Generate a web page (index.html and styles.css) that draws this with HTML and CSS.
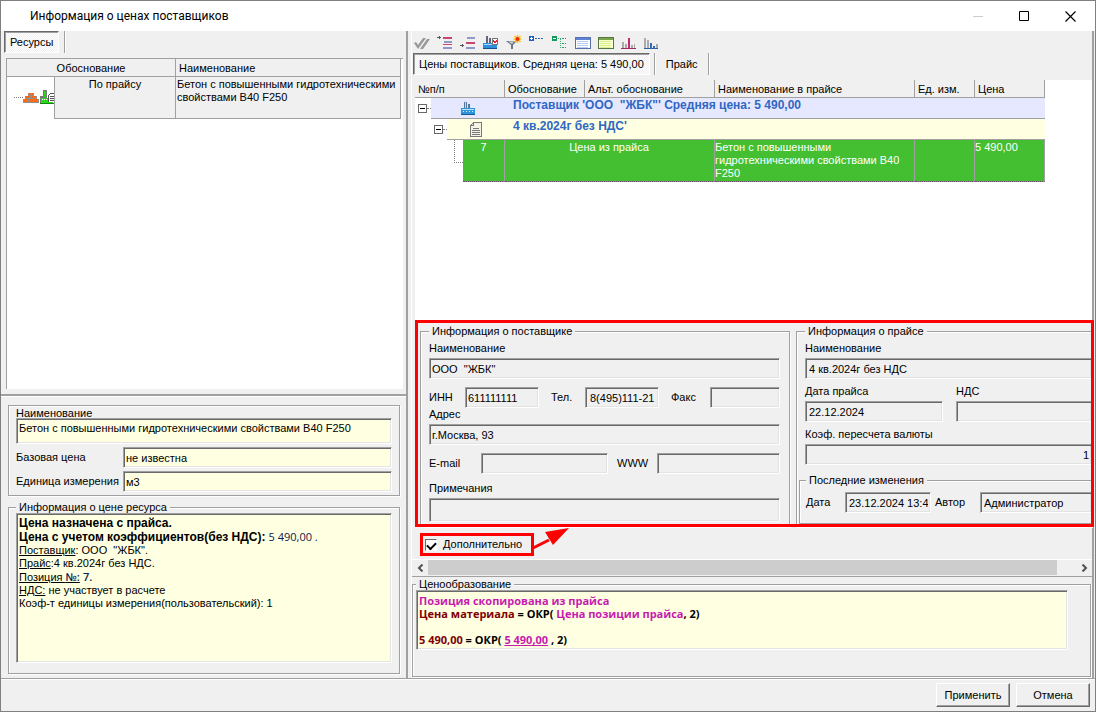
FILE: index.html
```html
<!DOCTYPE html>
<html lang="ru">
<head>
  <meta charset="UTF-8">
  <meta name="viewport" content="width=device-width, initial-scale=1.0">
  <title>Информация о ценах поставщиков</title>
  <link rel="stylesheet" href="styles.css">
</head>
<body>
  <div class="window">
    <header class="titlebar">
      <h1>Информация о ценах поставщиков</h1>
      <button class="win-btn" aria-label="Свернуть" disabled>
        <svg width="11" height="11"><path d="M0 5.5h10" stroke="#ccc"/></svg>
      </button>
      <button class="win-btn" aria-label="Развернуть">
        <svg width="11" height="11"><path d="M.5.5h9v9h-9z" fill="none" stroke="#000"/></svg>
      </button>
      <button class="win-btn" aria-label="Закрыть">
        <svg width="11" height="11"><path d="M.5.5l10 10M10.5.5l-10 10" stroke="#000" stroke-width="1.2"/></svg>
      </button>
    </header>

    <main class="panes">
      <section class="left">
        <nav class="tabs">
          <button class="tab active">Ресурсы</button>
          <span class="sep"></span>
        </nav>

        <div class="list resources">
          <table>
            <colgroup><col class="c-tree"><col class="c-basis"><col></colgroup>
            <thead>
              <tr><th colspan="2" class="center">Обоснование</th><th>Наименование</th></tr>
            </thead>
            <tbody>
              <tr>
                <td class="tree-cell">
                  <div class="tree-icons">
                    <span class="dots"></span>
                    <svg width="16" height="11" shape-rendering="crispEdges">
                      <path d="M5 1h6v3H5zM2 4h12v3H2zM0 7h16v4H0z" fill="#909090"/>
                      <path d="M6 1h4v2H6zM3 4h4v2H3zM9 4h4v2H9zM1 7h4v3H1zM6 7h4v3H6zM11 7h4v3h-4z" fill="#ff6a10"/>
                    </svg>
                    <svg width="15" height="15" shape-rendering="crispEdges">
                      <path d="M4 0h4v8h1v6H1V6h3z" fill="#777"/>
                      <path d="M5 1h2v6H5zM2 8h12v5H2z" fill="#27d916"/>
                      <path d="M1 13h14v1H1z" fill="#148410"/>
                      <path d="M9 3h6v9H9z" fill="#fff"/>
                      <path d="M9.5 12V5.5l2-2H15M11 6h4M11 8h4M11 10h4" fill="none" stroke="#555"/>
                      <path d="M3 9h1v1H3zM5 9h1v1H5zM7 9h1v1H7z" fill="#fff"/>
                    </svg>
                  </div>
                </td>
                <td class="center">По прайсу</td>
                <td>Бетон с повышенными гидротехническими свойствами В40 F250</td>
              </tr>
            </tbody>
          </table>
        </div>

        <div class="resource-info">
          <div class="group plain">
            <label for="resName">Наименование</label>
            <textarea class="field note" id="resName" rows="1" readonly>Бетон с повышенными гидротехническими свойствами В40 F250</textarea>
            <div class="pair">
              <label for="basePrice">Базовая цена</label>
              <input class="field" type="text" id="basePrice" value="не известна" readonly>
            </div>
            <div class="pair">
              <label for="unit">Единица измерения</label>
              <input class="field" type="text" id="unit" value="м3" readonly>
            </div>
          </div>

          <fieldset class="group price-info">
            <legend>Информация о цене ресурса</legend>
            <div class="memo">
              <b>Цена назначена с прайса.</b><br>
              <b>Цена с учетом коэффициентов(без НДС):</b> <span class="num">5 490,00 .</span><br>
              <u>Поставщик</u>: ООО&nbsp; "ЖБК".<br>
              <u>Прайс</u>:4 кв.2024г без НДС.<br>
              <u>Позиция <span class="num strong">№:</span></u> <span class="num strong">7.</span><br>
              <u>НДС:</u> не участвует в расчете<br>
              Коэф-т единицы измерения(пользовательский): 1
            </div>
          </fieldset>
        </div>
      </section>

      <section class="right">
        <div class="toolbar">
          <button aria-label="Выбрать"><svg width="16" height="16"><path d="M0 8l2-1 2 3 5-7h3L4 14zM6 14l7-10h3L9 14z" fill="#999"/></svg></button>
          <button aria-label="Свернуть уровень"><svg width="16" height="16" shape-rendering="crispEdges"><path d="M0 2h4v1H0zM2 1h1v3H2z" fill="#555"/><path d="M6 2h9v2H6zM6 9h9v1H6z" fill="#c8476f"/><path d="M7 6h8v2H7zM6 12h9v2H6z" fill="#8c9bc8"/></svg></button>
          <button aria-label="Развернуть уровень"><svg width="16" height="16" shape-rendering="crispEdges"><path d="M0 10h4v1H0zM2 9h1v3H2z" fill="#555"/><path d="M7 2h8v2H7zM6 12h9v2H6z" fill="#8c9bc8"/><path d="M6 7h9v2H6z" fill="#c8476f"/></svg></button>
          <button aria-label="Поставщик"><svg width="16" height="16" shape-rendering="crispEdges"><path d="M3 1h2v7H3zM6 3h2v5H6z" fill="#667"/><path d="M0 8h14v5H0z" fill="#2f8fdc"/><path d="M1 9h10v1H1z" fill="#a8dcff"/><path d="M0 13h14v1H0z" fill="#15518f"/><path d="M9 3h6v7H9z" fill="#777"/><path d="M10 4h4v5h-4z" fill="#fff"/><path d="M10 5h1v1h2V5h1v2h-1v1h-2V7h-1z" fill="#e0203c"/></svg></button>
          <button aria-label="Фильтр"><svg width="16" height="16"><path d="M0 6h11L7 10v4H5v-4z" fill="#6b7785"/><path d="M2 6.500h6L6 9z" fill="#ccd5df"/><path d="M11.5 0v8M7.5 4h8M8.500 1l6 6M14.500 1l-6 6" stroke="#ffc400" stroke-width="1.500"/><circle cx="11.500" cy="4" r="2" fill="#f02a18"/></svg></button>
          <button aria-label="Развернуть все"><svg width="16" height="16" shape-rendering="crispEdges"><path d="M0 1h5v5H0z" fill="#1c5dc0"/><path d="M1 3h3v1H1zM2 2h1v3H2z" fill="#fff"/><path d="M6 3.500h9" stroke="#2c64b8" stroke-dasharray="2 1"/></svg></button>
          <button aria-label="Свернуть все"><svg width="16" height="16" shape-rendering="crispEdges"><path d="M0 1h5v5H0z" fill="#149a58"/><path d="M1 3h3v1H1z" fill="#fff"/><path d="M6 3.500h4M8.500 4v9" stroke="#45a878" stroke-dasharray="1 1" fill="none"/><path d="M10 3.500h4M10 8.500h4M10 12.500h4" stroke="#249b62" stroke-dasharray="2 1"/></svg></button>
          <button aria-label="Таблица"><svg width="16" height="16" shape-rendering="crispEdges"><path d="M.5 2.500h15v11H.5z" fill="#fff" stroke="#5872a8"/><path d="M1 3h14v2H1z" fill="#5c83d8"/><path d="M2 6.500h11M2 8.500h11M2 10.500h11M2 12.500h11" stroke="#b8cbf5"/></svg></button>
          <button aria-label="Таблица прайса"><svg width="16" height="16" shape-rendering="crispEdges"><path d="M.5 2.500h15v11H.5z" fill="#f9ffd0" stroke="#557542"/><path d="M1 3h14v2H1z" fill="#7ba448"/><path d="M2 6.500h11M2 8.500h11M2 10.500h11M2 12.500h11" stroke="#dcee8b"/></svg></button>
          <button aria-label="Средняя цена"><svg width="16" height="16" shape-rendering="crispEdges"><path d="M1 7h2v6H1zM4 9h2v4H4zM10 10h2v3h-2zM13 9h1v4h-1z" fill="#aaa"/><path d="M7 3h2v10H7z" fill="#c42a72"/><path d="M0 13h15v1H0z" fill="#a12a61"/></svg></button>
          <button aria-label="Минимальная цена"><svg width="16" height="16" shape-rendering="crispEdges"><path d="M0 3h2v10H0zM3 5h2v8H3zM12 9h2v4h-2z" fill="#aaa"/><path d="M6 8h2v5H6zM9 11h2v2H9z" fill="#2d6dc0"/><path d="M0 13h14v1H0z" fill="#2d61a4"/></svg></button>
        </div>

        <nav class="tabs">
          <button class="tab active">Цены поставщиков. Средняя цена: 5 490,00</button>
          <span class="sep"></span>
          <button class="tab">Прайс</button>
          <span class="sep"></span>
        </nav>

        <div class="list prices">
          <table>
            <colgroup>
              <col class="c-num"><col class="c-just"><col class="c-alt"><col class="c-name"><col class="c-unit"><col class="c-price">
            </colgroup>
            <thead>
              <tr><th>№п/п</th><th>Обоснование</th><th>Альт. обоснование</th><th>Наименование в прайсе</th><th>Ед. изм.</th><th>Цена</th></tr>
            </thead>
            <tbody>
              <tr class="supplier">
                <td>
                  <div class="node">
                    <span class="gutter"><button class="toggle" aria-label="Свернуть поставщика"></button></span>
                    <span class="node-icon">
                      <svg width="14" height="14" shape-rendering="crispEdges"><path d="M3 1h3v7H3zM7 3h2v5H7z" fill="#53789c"/><path d="M4 0h1v7H4z" fill="#b8d8ee"/><path d="M0 7h14v6H0z" fill="#3195dd"/><path d="M1 8h12v1H1z" fill="#b5e2ff"/><path d="M2 10h1v1H2zM5 10h1v1H5zM8 10h1v1H8zM11 10h1v1h-1z" fill="#d8f1ff"/><path d="M0 13h14v1H0z" fill="#185b92"/></svg>
                    </span>
                  </div>
                </td>
                <td colspan="5">Поставщик 'ООО&nbsp; "ЖБК"' Средняя цена: 5 490,00</td>
              </tr>
              <tr class="price-list">
                <td>
                  <div class="node">
                    <span class="gutter deep"><button class="toggle" aria-label="Свернуть прайс"></button></span>
                    <span class="node-icon">
                      <svg width="12" height="15" shape-rendering="crispEdges"><path d="M3.5.5h8v14H.5V3.5z" fill="#f5f3e8" stroke="#777"/><path d="M3.5 1v2.500H1M3 6.500h6M2 8.500h8M2 10.500h8M2 12.500h8" stroke="#777" fill="none"/></svg>
                    </span>
                  </div>
                </td>
                <td colspan="5">4 кв.2024г без НДС'</td>
              </tr>
              <tr class="selected">
                <td>
                  <div class="node">
                    <span class="gutter leaf"></span>
                    <span class="cell-num">7</span>
                  </div>
                </td>
                <td colspan="2" class="center">Цена из прайса</td>
                <td>Бетон с повышенными гидротехническими свойствами В40 F250</td>
                <td></td>
                <td>5 490,00</td>
              </tr>
            </tbody>
          </table>
        </div>

        <div class="details">
          <fieldset class="group supplier-info">
            <legend>Информация о поставщике</legend>
            <label class="caption" for="supName">Наименование</label>
            <div class="line"><input class="field" type="text" id="supName" value='ООО  "ЖБК"' readonly></div>
            <div class="line contacts">
              <label for="inn">ИНН</label>
              <input class="field" type="text" id="inn" value="611111111" readonly>
              <label for="tel">Тел.</label>
              <input class="field phone" type="text" id="tel" value="8(495)111-21" readonly>
              <label for="fax">Факс</label>
              <input class="field" type="text" id="fax" readonly>
            </div>
            <label class="caption" for="addr">Адрес</label>
            <div class="line"><input class="field" type="text" id="addr" value="г.Москва, 93" readonly></div>
            <div class="line web">
              <label for="email">E-mail</label>
              <input class="field" type="text" id="email" readonly>
              <label for="www">WWW</label>
              <input class="field" type="text" id="www" readonly>
            </div>
            <label class="caption" for="remarks">Примечания</label>
            <textarea class="field remarks" id="remarks" rows="1" readonly></textarea>
          </fieldset>

          <fieldset class="group list-info">
            <legend>Информация о прайсе</legend>
            <label class="caption" for="listName">Наименование</label>
            <div class="line"><input class="field" type="text" id="listName" value="4 кв.2024г без НДС" readonly></div>
            <div class="line dates">
              <label class="caption" for="listDate">Дата прайса</label>
              <label class="caption" for="vat">НДС</label>
              <input class="field" type="text" id="listDate" value="22.12.2024" readonly>
              <input class="field" type="text" id="vat" readonly>
            </div>
            <label class="caption" for="rate">Коэф. пересчета валюты</label>
            <div class="line"><input class="field right-text" type="text" id="rate" value="1" readonly></div>
            <fieldset class="group changes">
              <legend>Последние изменения</legend>
              <div class="author">
                <label for="changed">Дата</label>
                <input class="field" type="text" id="changed" value="23.12.2024 13:42" readonly>
                <label for="author">Автор</label>
                <input class="field" type="text" id="author" value="Администратор" readonly>
              </div>
            </fieldset>
          </fieldset>
        </div>

        <div class="extra">
          <label class="extra-check"><input type="checkbox" checked>Дополнительно</label>
          <svg class="arrow" width="40" height="30"><path d="M1 21L17 13" stroke="#f00" stroke-width="3"/><path d="M37 1L13 5l8 13z" fill="#f00"/></svg>
        </div>

        <div class="scrollbar">
          <button aria-label="Влево"><svg width="7" height="8"><path d="M5.500.5L2 4l3.500 3.500" fill="none" stroke="#505050" stroke-width="2"/></svg></button>
          <div class="track"><div class="thumb"></div></div>
          <button aria-label="Вправо"><svg width="7" height="8"><path d="M1.500.5L5 4 1.500 7.500" fill="none" stroke="#505050" stroke-width="2"/></svg></button>
        </div>

        <fieldset class="group pricing">
          <legend>Ценообразование</legend>
          <div class="memo formula">
            <span class="pink">Позиция скопирована из прайса</span><br>
            <span class="maroon">Цена материала</span> = ОКР( <span class="pink">Цена позиции прайса</span>, 2)<br>
            <br>
            <span class="maroon">5 490,00</span> = ОКР( <a class="pink" href="#">5 490,00</a> , 2)
          </div>
        </fieldset>
      </section>
    </main>

    <footer class="actions">
      <button class="push">Применить</button>
      <button class="push">Отмена</button>
    </footer>
  </div>
</body>
</html>
```

FILE: styles.css
```css
* {
  box-sizing: border-box;
}
body {
  margin: 0;
  font: 11px/13px "Liberation Sans", Arial, sans-serif;
  color: #000;
  background: #f0f0f0;
}
button, input, textarea {
  font: inherit;
  color: inherit;
  margin: 0;
}
button {
  border: none;
  background: none;
  padding: 0;
}
svg {
  display: block;
}
.window {
  display: flex;
  flex-direction: column;
  min-height: 100vh;
  border: 1px solid #808080;
}

/* title bar */
.titlebar {
  display: flex;
  align-items: center;
  height: 30px;
  padding-right: 2px;
  background: #fff;
}
.titlebar h1 {
  flex: 1;
  margin: 0;
  padding-left: 29px;
  font: 12px/16px Roboto, sans-serif;
}
.win-btn {
  display: flex;
  justify-content: center;
  align-items: center;
  width: 46px;
  height: 26px;
}

/* panes */
.panes {
  flex: 1;
  display: grid;
  grid-template-columns: 407px 1fr;
  border-bottom: 1px solid #a0a0a0;
}
.left, .right {
  display: flex;
  flex-direction: column;
  min-width: 0;
  border-right: 2px solid #a0a0a0;
}
.right {
  margin-left: 3px;
  margin-right: 1px;
  border-left: 1px solid #fff;
}

/* tabs */
.tabs {
  display: flex;
  height: 22px;
  gap: 5px;
  padding-left: 3px;
}
.tab {
  padding: 0 5px;
}
.tab.active {
  border: 1px solid;
  border-color: #696969 #fff #fff #696969;
  box-shadow: inset 1px 1px 0 #a0a0a0;
  background: repeating-conic-gradient(#fff 0 25%, #f0f0f0 0 50%) 0 0 / 2px 2px;
}
.sep {
  width: 2px;
  border-left: 1px solid #a0a0a0;
  border-right: 1px solid #fff;
}
.right .tabs {
  gap: 4px;
  padding-left: 1px;
  margin-bottom: 5px;
}
.right .tab:not(.active) {
  padding: 0 6px;
}

/* lists */
.list {
  flex: 1;
  background: #fff;
}
.list table {
  width: 100%;
  table-layout: fixed;
  border-collapse: separate;
  border-spacing: 0;
}
.list th {
  height: 18px;
  padding: 2px 3px 0;
  font-weight: normal;
  text-align: left;
  white-space: nowrap;
  background: #f0f0f0;
  border-right: 1px solid #a0a0a0;
  border-bottom: 1px solid #a0a0a0;
}
.list td {
  padding: 1px;
  vertical-align: top;
}
.list .center {
  text-align: center;
}
.resources {
  margin: 5px 3px 0 5px;
  padding-right: 2px;
  border-left: 1px solid #a0a0a0;
  border-top: 1px solid #a0a0a0;
}
.c-tree {
  width: 48px;
}
.c-basis {
  width: 121px;
}
.resources td {
  height: 42px;
  background: #f0f0f0;
  border-right: 1px solid #a0a0a0;
  border-bottom: 1px solid #a0a0a0;
}
.resources .tree-cell {
  padding: 0;
  background: #fff;
  border-bottom: none;
}
.tree-icons {
  display: flex;
  align-items: center;
  height: 41px;
  padding-left: 7px;
}
.dots {
  width: 9px;
  border-top: 1px dotted #808080;
}

/* resource info */
.resource-info {
  display: flex;
  flex-direction: column;
  gap: 5px;
  margin-top: 5px;
  padding: 9px 6px 4px 7px;
  border-top: 2px solid #a0a0a0;
  box-shadow: inset 0 1px 0 #fff;
}
.group {
  min-width: 0;
  margin: 0;
  padding: 0 7px;
  border: 1px solid #a0a0a0;
  box-shadow: 1px 1px 0 #fff, inset 1px 1px 0 #fff;
}
.group legend {
  height: 12px;
  padding: 0 3px;
  line-height: 13px;
  background: #f0f0f0;
}
.plain {
  display: flex;
  flex-direction: column;
  gap: 3px;
  padding: 1px 7px 3px;
}
.plain > label {
  height: 8px;
}
.pair {
  display: grid;
  grid-template-columns: 107px 1fr;
  align-items: center;
}
.field {
  display: block;
  width: 100%;
  min-width: 0;
  height: 21px;
  padding: 1px 2px;
  border: 1px solid;
  border-color: #a0a0a0 #fff #fff #a0a0a0;
  border-radius: 0;
  box-shadow: inset 1px 1px 0 #696969, inset -1px -1px 0 #e3e3e3;
  background: #f0f0f0;
  outline: none;
  resize: none;
}
.plain .field {
  background: #ffffe1;
}
.field.note {
  height: 26px;
  padding: 3px 2px;
  overflow: hidden;
}
.field.remarks {
  height: 24px;
}
.price-info {
  padding-bottom: 10px;
}
.memo {
  height: 150px;
  padding: 3px 2px;
  border: 1px solid;
  border-color: #a0a0a0 #fff #fff #a0a0a0;
  box-shadow: inset 1px 1px 0 #696969, inset -1px -1px 0 #e3e3e3;
  background: #ffffe1;
}
.memo b {
  font-size: 12px;
}
.num {
  font-family: "Open Sans", "Noto Sans", sans-serif;
  color: #10204c;
}
.num.strong {
  font-weight: 600;
}

/* toolbar */
.toolbar {
  display: flex;
  gap: 7px;
  height: 22px;
  padding: 4px 0 0 2px;
}
.toolbar button {
  width: 16px;
  height: 16px;
}

/* price list */
.prices {
  margin-left: 3px;
}
.prices table {
  width: 630px;
}
.c-num { width: 90px; }
.c-just { width: 80px; }
.c-alt { width: 130px; }
.c-name { width: 200px; }
.c-unit { width: 60px; }
.c-price { width: 70px; }
.prices tbody tr {
  height: 21px;
}
.prices td:first-child {
  padding: 0;
  height: 1px;
}
.supplier td, .price-list td {
  font-size: 12px;
  font-weight: bold;
  color: #2f67c4;
}
.prices .supplier td + td, .prices .price-list td + td {
  padding-left: 8px;
  border-bottom: 1px solid #a0a0a0;
}
.supplier td + td, .supplier .node-icon {
  background: #e6e8ff;
}
.price-list td + td, .price-list .node-icon {
  background: #ffffe1;
}
.node {
  display: flex;
  height: 21px;
}
.gutter {
  display: flex;
  justify-content: flex-end;
  align-items: center;
  width: 16px;
}
.gutter::after {
  content: "";
  width: 4px;
  border-top: 1px dotted #808080;
}
.gutter.deep {
  width: 32px;
}
.toggle {
  width: 9px;
  height: 9px;
  border: 1px solid #696969;
  background: linear-gradient(#000, #000) center / 5px 1px no-repeat #fff;
}
.node-icon {
  flex: 1;
  display: flex;
  justify-content: center;
  align-items: center;
  padding-right: 1px;
  border-bottom: 1px solid #a0a0a0;
}
.selected .node {
  height: 42px;
}
.gutter.leaf {
  width: 48px;
  align-items: flex-start;
}
.gutter.leaf::after {
  width: 8px;
  height: 22px;
  border-top: none;
  border-left: 1px dotted #808080;
  border-bottom: 1px dotted #808080;
}
.cell-num {
  flex: 1;
  padding-top: 1px;
  text-align: center;
}
.selected td {
  color: #fff;
}
.prices .selected td + td {
  padding-left: 0;
}
.selected td + td, .cell-num {
  background: #44bf32;
  border-right: 1px solid #a0a0a0;
  border-bottom: 1px dotted #6a4c6a;
}

/* details */
.details {
  position: relative;
  display: grid;
  grid-template-columns: 370px 1fr;
  gap: 6px;
  margin-left: 3px;
  padding: 5px 0 0 5px;
}
.details::after {
  content: "";
  position: absolute;
  inset: 0 -2px 0 0;
  border: 3px solid #f00;
  pointer-events: none;
}
.supplier-info {
  padding: 5px 9px 4px 8px;
}
.caption {
  display: block;
  height: 13px;
  margin-bottom: 3px;
}
.line {
  margin-bottom: 8px;
}
.contacts {
  display: grid;
  grid-template-columns: 36px 74px 46px 74px 51px 1fr;
  align-items: center;
  margin-bottom: 0;
}
.contacts label:not(:first-child) {
  padding-left: 12px;
}
.contacts .phone {
  padding-left: 4px;
}
.web {
  display: grid;
  grid-template-columns: 52px 127px 49px 1fr;
  align-items: center;
}
.web label:nth-of-type(2) {
  padding-left: 9px;
}
.list-info {
  padding: 5px 0 0 8px;
  border-right: none;
}
.list-info .line {
  margin-bottom: 6px;
}
.dates {
  display: grid;
  grid-template-columns: 138px 1fr;
  column-gap: 13px;
}
.list-info .field {
  padding-left: 3px;
}
.list-info .right-text {
  text-align: right;
}
.changes {
  margin: 9px 0 0 -6px;
  padding: 6px 0 10px 6px;
  border-right: none;
}
.author {
  display: grid;
  grid-template-columns: 39px 86px 49px 1fr;
  align-items: center;
}
.author label:nth-of-type(2) {
  padding-left: 4px;
}

/* extra */
.extra {
  position: relative;
  height: 32px;
  padding: 6px 0 0 8px;
}
.extra-check {
  display: inline-flex;
  align-items: center;
  width: 114px;
  height: 23px;
  border: 3px solid #f00;
  padding-left: 2px;
}
.extra-check input {
  appearance: none;
  width: 12px;
  height: 12px;
  margin-right: 6px;
  border: 1px solid;
  border-color: #696969 #fff #fff #696969;
  background: #fff;
}
.extra-check input:checked::before {
  content: "";
  display: block;
  width: 7px;
  height: 4px;
  margin: 2px 1px;
  border-left: 2px solid #000;
  border-bottom: 2px solid #000;
  transform: rotate(-45deg);
}
.arrow {
  position: absolute;
  left: 120px;
  top: 0;
}

/* scrollbar */
.scrollbar {
  display: flex;
  align-items: center;
  height: 18px;
  border-top: 1px solid #fff;
  border-bottom: 1px solid #a0a0a0;
}
.scrollbar button {
  display: flex;
  justify-content: center;
  width: 16px;
}
.track {
  flex: 1;
  height: 100%;
}
.thumb {
  width: 97%;
  height: 15px;
  background: #cdcdcd;
}

/* pricing */
.pricing {
  margin: 1px 1px 1px 0;
  padding: 0 22px 26px 3px;
}
.formula {
  height: 60px;
  font-family: "Open Sans", "Noto Sans", sans-serif;
  font-weight: bold;
}
.pink {
  color: #c71bb0;
}
.maroon {
  color: #800000;
}

/* footer */
.actions {
  display: flex;
  justify-content: flex-end;
  gap: 6px;
  padding: 3px 5px 4px 0;
  border-top: 1px solid #fff;
}
.push {
  width: 74px;
  height: 24px;
  border: 1px solid;
  border-color: #fff #696969 #696969 #fff;
  box-shadow: inset -1px -1px 0 #a0a0a0;
}
```
